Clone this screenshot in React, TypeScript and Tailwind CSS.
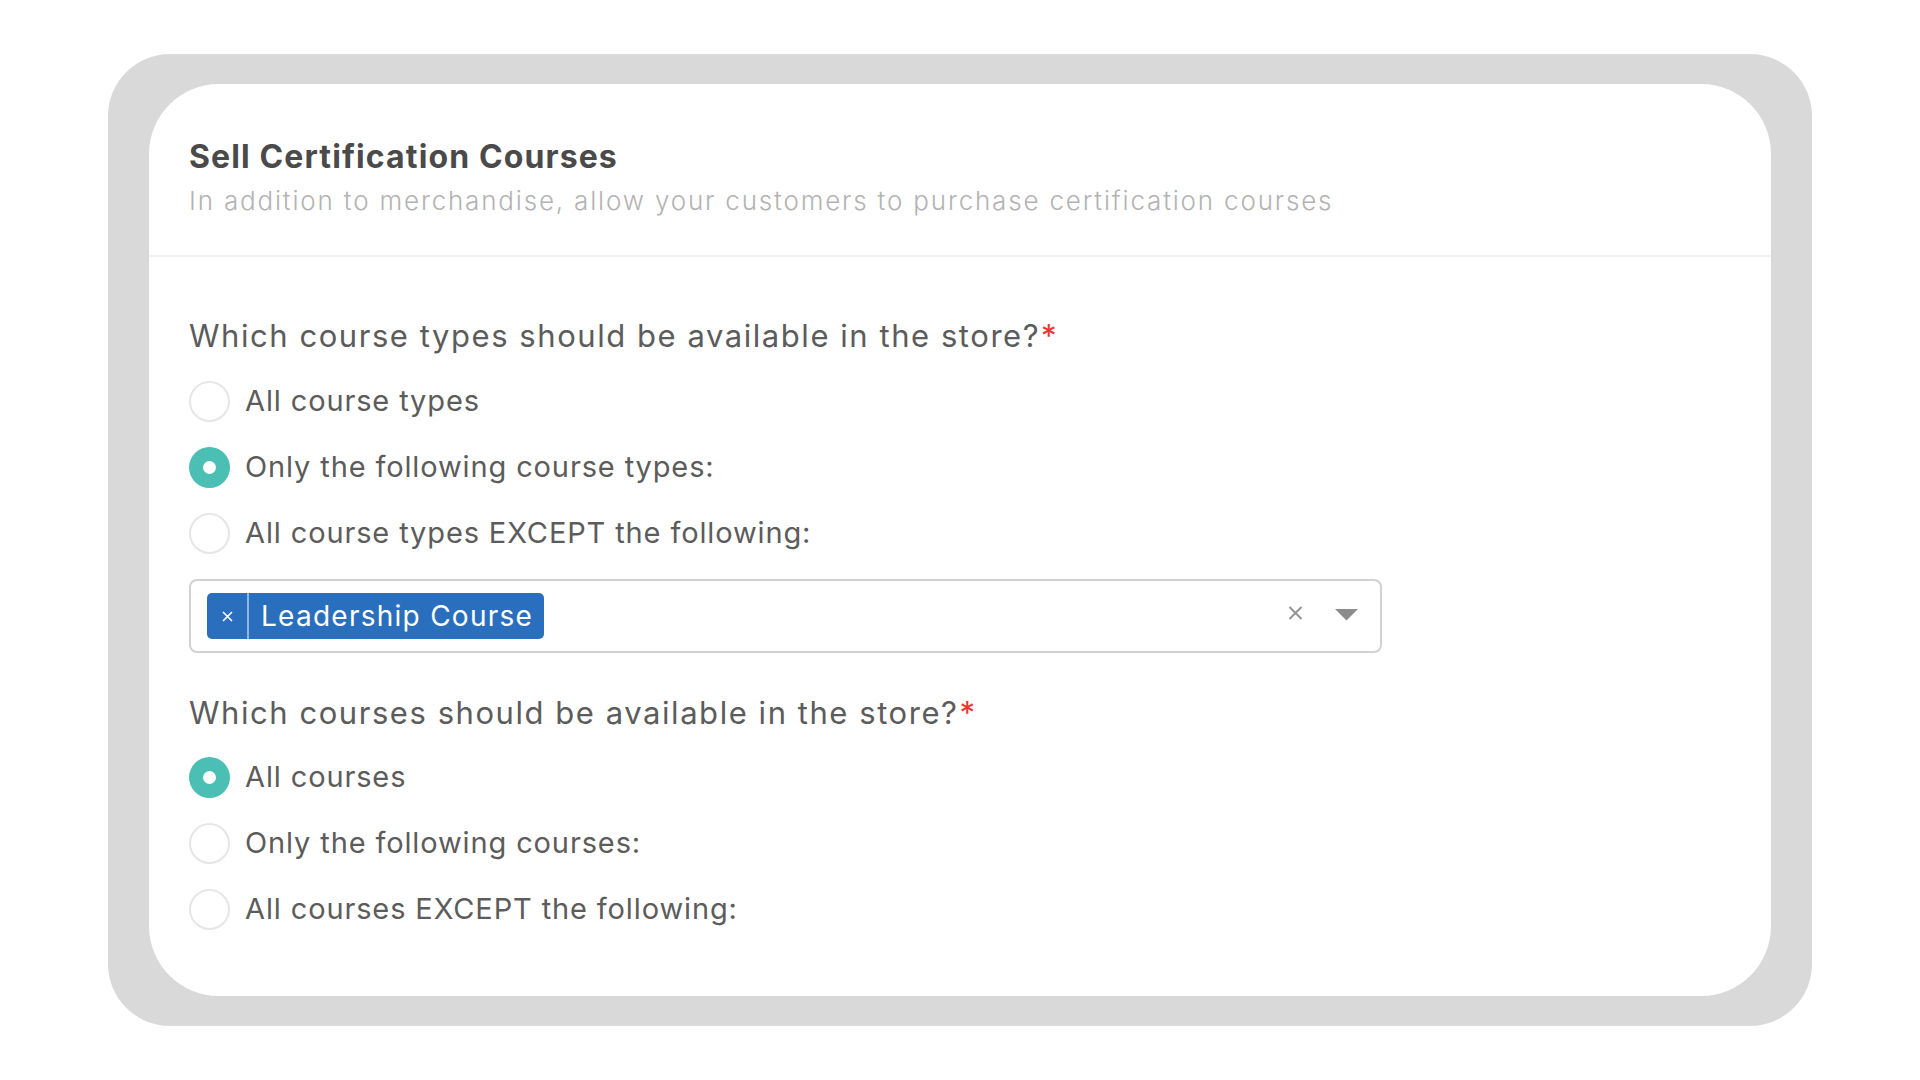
import React from "react";

const font = { fontFamily: "Inter, 'Open Sans', sans-serif" };

function Radio({ checked }: { checked?: boolean }) {
  if (checked) {
    return (
      <div className="w-[41px] h-[41px] rounded-full bg-[#4bbfb4] flex items-center justify-center shrink-0">
        <div className="w-[13px] h-[13px] rounded-full bg-white" />
      </div>
    );
  }
  return <div className="w-[41px] h-[41px] rounded-full border-2 border-[#e6e6e6] bg-white shrink-0" />;
}

function Option({ label, checked }: { label: string; checked?: boolean }) {
  return (
    <div className="h-[66px] flex items-center gap-[15px]">
      <Radio checked={checked} />
      <span className="text-[29px] leading-[40px] tracking-[0.03em] text-[#5c5c5c]">{label}</span>
    </div>
  );
}

function Question({ text }: { text: string }) {
  return (
    <div className="text-[31px] leading-[40px] tracking-[0.05em] text-[#5c5c5c]">
      {text}
      <span className="text-[#ef3434] ml-[1px]">*</span>
    </div>
  );
}

export default function App() {
  return (
    <div className="w-[1920px] h-[1080px] bg-white px-[108px] py-[54px]" style={font}>
      <div className="h-full rounded-[62px] bg-[#d9d9d9] px-[41px] py-[30px]">
        <div className="h-full rounded-[70px] bg-white overflow-hidden">
          <div className="h-[173px] border-b-2 border-[#efefef] px-[40px] pt-[53px]">
            <div className="text-[32px] leading-[40px] font-bold tracking-[0.035em] text-[#4a4a4a]">
              Sell Certification Courses
            </div>
            <div className="mt-[8px] text-[26px] leading-[32px] font-light tracking-[0.07em] text-[#b3b3b3]">
              In addition to merchandise, allow your customers to purchase certification courses
            </div>
          </div>
          <div className="px-[40px] pt-[59px]">
            <Question text="Which course types should be available in the store?" />
            <div className="mt-[12px]">
              <Option label="All course types" />
              <Option label="Only the following course types:" checked />
              <Option label="All course types EXCEPT the following:" />
            </div>
            <div className="mt-[13px] w-[1193px] h-[74px] border-2 border-[#d2d2d2] rounded-[8px] flex items-center pl-[16px] pr-[22px]">
              <div className="h-[46px] flex items-stretch rounded-[5px] bg-[#2a6fbd] text-white">
                <div className="w-[40px] flex items-center justify-center">
                  <svg width="11" height="11" viewBox="0 0 11 11">
                    <path d="M1.5 1.5 L9.5 9.5 M9.5 1.5 L1.5 9.5" stroke="white" strokeWidth="1.7" strokeLinecap="round" />
                  </svg>
                </div>
                <div className="w-[2px] bg-[#8fb4e0]" />
                <div className="pl-[12px] pr-[11px] flex items-center text-[28px] tracking-[0.045em] leading-none">
                  Leadership Course
                </div>
              </div>
              <div className="flex-1" />
              <svg width="15" height="14" viewBox="0 0 15 14" className="-mt-[6px]">
                <path d="M1.5 1 L13.5 13 M13.5 1 L1.5 13" stroke="#949494" strokeWidth="2" />
              </svg>
              <svg width="23" height="12" viewBox="0 0 23 12" className="ml-[32px] -mt-[2px]">
                <path d="M0 0 L23 0 L11.5 11.5 Z" fill="#8c8c8c" />
              </svg>
            </div>
            <div className="mt-[40px]">
              <Question text="Which courses should be available in the store?" />
            </div>
            <div className="mt-[11px]">
              <Option label="All courses" checked />
              <Option label="Only the following courses:" />
              <Option label="All courses EXCEPT the following:" />
            </div>
          </div>
        </div>
      </div>
    </div>
  );
}
